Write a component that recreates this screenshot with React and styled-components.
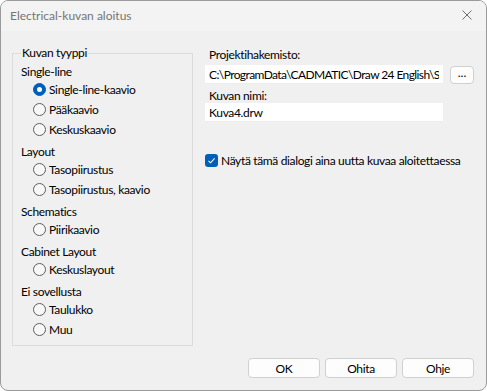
import React from "react";
import styled, { createGlobalStyle } from "styled-components";

const Global = createGlobalStyle`
  html, body { margin: 0; padding: 0; background: #ffffff; }
  body { font-family: Lato, "Noto Sans", "Liberation Sans", sans-serif; font-size: 12px; color: #000; }
  * { box-sizing: border-box; }
`;

const Window = styled.div`
  width: 487px;
  height: 391px;
  border: 1px solid #9a9a9a;
  border-radius: 8px;
  overflow: hidden;
  background: #f0f0f0;
  display: flex;
  flex-direction: column;
`;

const TitleBar = styled.div`
  height: 30px;
  flex: none;
  background: #f3f3f3;
  display: flex;
  align-items: center;
  justify-content: space-between;
  padding: 0 9px 1px 9px;
`;

const Title = styled.span`
  color: #757575;
  font-size: 12px;
  line-height: 16px;
`;

const CloseButton = styled.span`
  width: 12px;
  height: 12px;
  display: flex;
  margin-right: 4px;
  margin-top: -1px;
`;

const Body = styled.div`
  flex: 1;
  display: flex;
  flex-direction: column;
  letter-spacing: -0.35px;
`;

const Main = styled.div`
  flex: 1;
  display: flex;
  gap: 12px;
  padding: 14px 12px 0 11px;
`;

const Group = styled.fieldset`
  width: 181px;
  flex: none;
  margin: 0;
  padding: 4px 8px 0 8px;
  border: 1px solid #dcdcdc;
  display: flex;
  flex-direction: column;
  gap: 6px;
  min-width: 0;
`;

const Legend = styled.legend`
  padding: 0 1px;
  line-height: 16px;
`;

const Section = styled.div`
  display: flex;
  flex-direction: column;
`;

const Heading = styled.div`
  line-height: 14px;
  height: 14px;
`;

const RadioRow = styled.label`
  height: 20px;
  display: flex;
  align-items: center;
  gap: 3px;
  padding-left: 12px;
`;

const RadioCircle = styled.span`
  width: 13px;
  height: 13px;
  border-radius: 50%;
  flex: none;
  display: flex;
  align-items: center;
  justify-content: center;
  background: ${(p) => (p.$checked ? "#005fb8" : "#f7f7f7")};
  border: 1px solid ${(p) => (p.$checked ? "#005fb8" : "#5f5f5f")};
  &::after {
    content: "";
    display: ${(p) => (p.$checked ? "block" : "none")};
    width: 5px;
    height: 5px;
    border-radius: 50%;
    background: #ffffff;
  }
`;

const Right = styled.div`
  flex: 1;
  min-width: 0;
  display: flex;
  flex-direction: column;
  padding-top: 2px;
`;

const FieldLabel = styled.div`
  line-height: 15px;
  padding-left: 4px;
  margin-top: ${(p) => p.$top || 0}px;
`;

const FieldRow = styled.div`
  display: flex;
  align-items: center;
  gap: 7px;
  margin-top: 3px;
`;

const TextInput = styled.input`
  width: 238px;
  height: 19px;
  border: none;
  border-bottom: 1px solid #ececec;
  background: #ffffff;
  padding: 0 4px;
  font-family: inherit;
  font-size: 12px;
  letter-spacing: ${(p) => (p.$tight ? "-0.6px" : "-0.35px")};
  color: #000;
  outline: none;
`;

const SmallButton = styled.button`
  width: 24px;
  height: 18px;
  border: 1px solid #d0d0d0;
  border-radius: 4px;
  background: #fdfdfd;
  font-family: inherit;
  font-size: 12px;
  line-height: 12px;
  padding: 0 0 5px 0;
  color: #000;
`;

const CheckRow = styled.label`
  display: flex;
  align-items: center;
  gap: 3px;
  margin-top: 30px;
  height: 16px;
  white-space: nowrap;
`;

const CheckBox = styled.span`
  width: 13px;
  height: 13px;
  border-radius: 3px;
  background: #005fb8;
  display: flex;
  align-items: center;
  justify-content: center;
  flex: none;
`;

const Footer = styled.div`
  height: 44px;
  flex: none;
  display: flex;
  justify-content: flex-end;
  align-items: flex-start;
  gap: 5px;
  padding: 12px 12px 0 0;
`;

const DialogButton = styled.button`
  width: 72px;
  height: 20px;
  border: 1px solid #d0d0d0;
  border-radius: 4px;
  background: #fdfdfd;
  font-family: inherit;
  font-size: 12px;
  letter-spacing: inherit;
  color: #000;
  padding: 0;
`;

const Radio = ({ checked, children }) => (
  <RadioRow>
    <RadioCircle $checked={checked} />
    <span>{children}</span>
  </RadioRow>
);

const sections = [
  { title: "Single-line", items: ["Single-line-kaavio", "Pääkaavio", "Keskuskaavio"] },
  { title: "Layout", items: ["Tasopiirustus", "Tasopiirustus, kaavio"] },
  { title: "Schematics", items: ["Piirikaavio"] },
  { title: "Cabinet Layout", items: ["Keskuslayout"] },
  { title: "Ei sovellusta", items: ["Taulukko", "Muu"] },
];

export default function App() {
  return (
    <>
      <Global />
      <Window>
        <TitleBar>
          <Title>Electrical-kuvan aloitus</Title>
          <CloseButton>
            <svg width="12" height="12" viewBox="0 0 12 12">
              <path d="M1.5 1.5 L10.5 10.5 M10.5 1.5 L1.5 10.5" stroke="#6e6e6e" strokeWidth="1" fill="none" />
            </svg>
          </CloseButton>
        </TitleBar>
        <Body>
          <Main>
            <Group>
              <Legend>Kuvan tyyppi</Legend>
              {sections.map((s, i) => (
                <Section key={s.title}>
                  <Heading>{s.title}</Heading>
                  {s.items.map((it, j) => (
                    <Radio key={it} checked={i === 0 && j === 0}>
                      {it}
                    </Radio>
                  ))}
                </Section>
              ))}
            </Group>
            <Right>
              <FieldLabel>Projektihakemisto:</FieldLabel>
              <FieldRow>
                <TextInput $tight readOnly value={"C:\\ProgramData\\CADMATIC\\Draw 24 English\\Samples"} />
                <SmallButton>...</SmallButton>
              </FieldRow>
              <FieldLabel $top={4}>Kuvan nimi:</FieldLabel>
              <TextInput readOnly value="Kuva4.drw" />
              <CheckRow>
                <CheckBox>
                  <svg width="9" height="9" viewBox="0 0 9 9">
                    <path d="M1.5 4.8 L3.6 6.8 L7.6 2.4" stroke="#ffffff" strokeWidth="1.1" fill="none" />
                  </svg>
                </CheckBox>
                <span>Näytä tämä dialogi aina uutta kuvaa aloitettaessa</span>
              </CheckRow>
            </Right>
          </Main>
          <Footer>
            <DialogButton>OK</DialogButton>
            <DialogButton>Ohita</DialogButton>
            <DialogButton>Ohje</DialogButton>
          </Footer>
        </Body>
      </Window>
    </>
  );
}
